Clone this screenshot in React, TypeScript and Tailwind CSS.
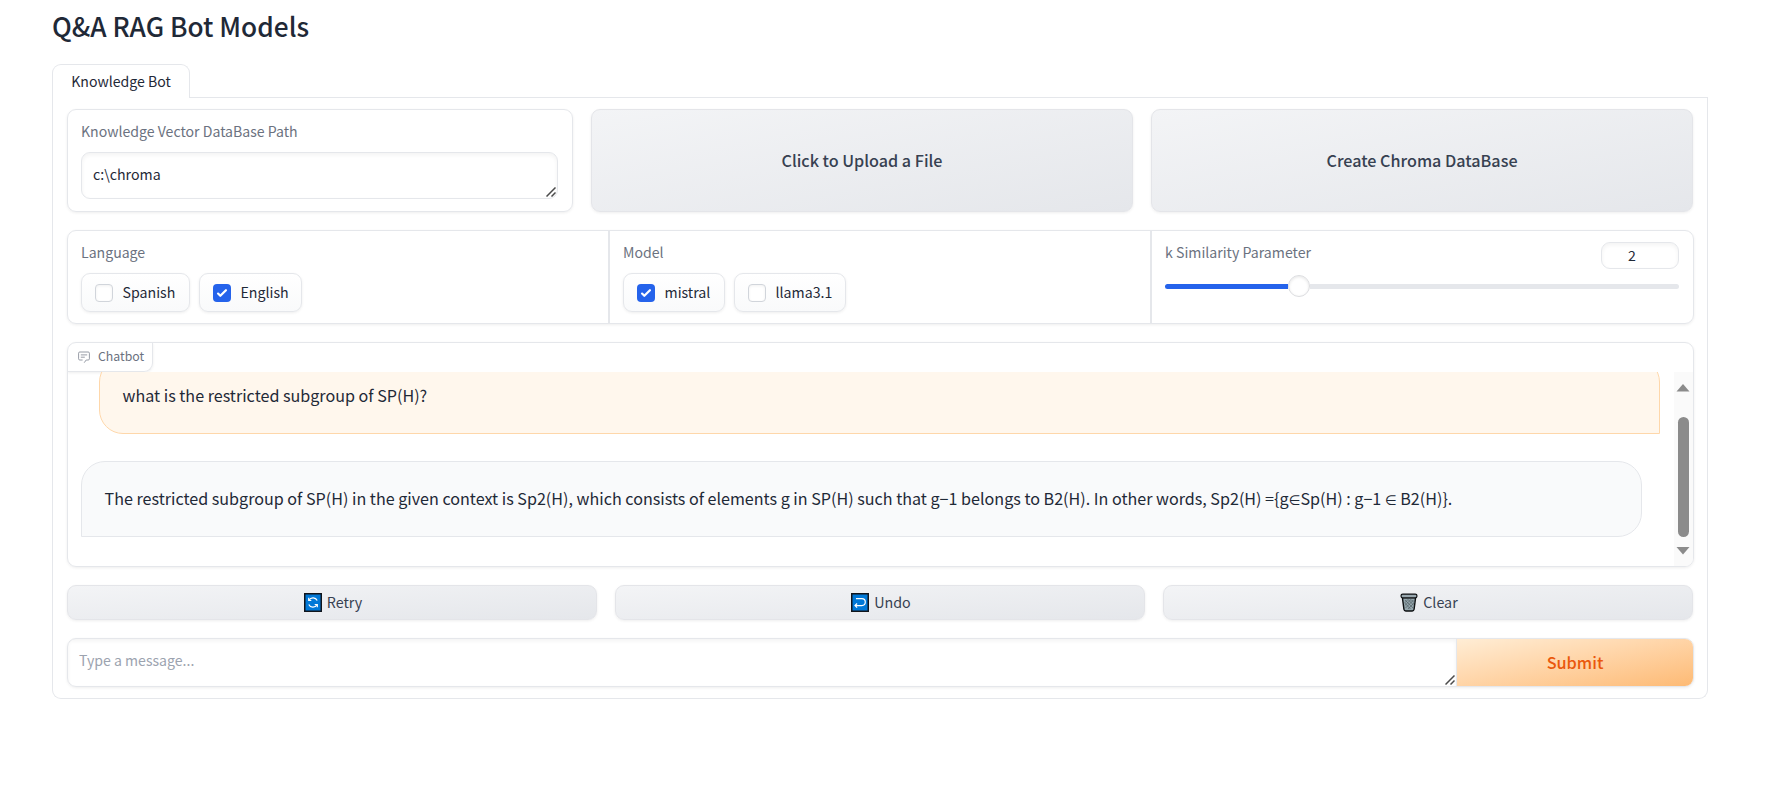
import React from "react";

const cardShadow = "shadow-[0_1px_3px_0_rgba(0,0,0,0.07)]";
const grayButton =
  "rounded-[9px] border border-[#e4e5e9] bg-linear-to-br from-[#f3f4f6] to-[#e5e7eb] text-[#374151] shadow-[0_1px_3px_0_rgba(0,0,0,0.07)]";

function ResizeHandle() {
  return (
    <svg className="absolute right-[1.5px] bottom-[1px]" width="10" height="10" viewBox="0 0 10 10">
      <path d="M0.5 9.5L9.5 0.5M5.5 9.5L9.5 5.5" stroke="#4a4a4a" strokeWidth="1.5" fill="none" />
    </svg>
  );
}

function ElementOf() {
  return <span className="font-['DejaVu_Sans',sans-serif] text-[13.5px] leading-none">∈</span>;
}

function Check({ label, checked, width }: { label: string; checked?: boolean; width: string }) {
  return (
    <label
      className={`flex h-[39px] items-center rounded-[9px] border border-[#e5e7eb] bg-linear-to-b from-white to-[#f9fafb] pl-[13px] shadow-[0_1px_3px_0_rgba(0,0,0,0.07)] ${width}`}
    >
      {checked ? (
        <span className="flex h-[18px] w-[18px] shrink-0 items-center justify-center rounded-[4px] bg-[#2563eb]">
          <svg width="18" height="18" viewBox="0 0 16 16" fill="#fff">
            <path d="M12.207 4.793a1 1 0 010 1.414l-5 5a1 1 0 01-1.414 0l-2-2a1 1 0 011.414-1.414L6.5 9.086l4.293-4.293a1 1 0 011.414 0z" />
          </svg>
        </span>
      ) : (
        <span className="h-[18px] w-[18px] shrink-0 rounded-[4px] border border-[#d1d5db] bg-white shadow-[inset_0_1px_3px_rgba(0,0,0,0.06)]" />
      )}
      <span className="-mt-[1px] ml-[9.5px] text-[14.2px] leading-[20px] whitespace-nowrap text-[#1f2937]">{label}</span>
    </label>
  );
}

function RetryIcon() {
  return (
    <svg width="18" height="19" viewBox="0 0 18 19">
      <rect x="0.75" y="0.75" width="16.5" height="17.5" fill="#0078d7" stroke="#10151c" strokeWidth="1.5" />
      <g fill="none" stroke="#fff" strokeWidth="1.2">
        <path d="M5 7.2A4.6 4.6 0 0 1 13.2 7.6M13 11.8A4.6 4.6 0 0 1 4.8 11.4" />
        <path d="M4.7 4.8V7.5H7.3M13.3 14.2V11.5H10.7" />
      </g>
    </svg>
  );
}

function UndoIcon() {
  return (
    <svg width="18" height="19" viewBox="0 0 18 19">
      <rect x="0.75" y="0.75" width="16.5" height="17.5" fill="#0078d7" stroke="#10151c" strokeWidth="1.5" />
      <path
        d="M5 5.6H10.8A3.5 3.5 0 0 1 10.8 12.6H4.2M6.1 10.5L4 12.6L6.1 14.7"
        fill="none"
        stroke="#fff"
        strokeWidth="1.2"
      />
    </svg>
  );
}

function TrashIcon() {
  return (
    <svg width="18" height="19" viewBox="0 0 18 19">
      <path d="M2.4 4.6L3.9 16.2Q4.2 18 5.8 18H12.2Q13.8 18 14.1 16.2L15.6 4.6Z" fill="#93a4ab" stroke="#0c0f11" strokeWidth="1.4" />
      <path
        d="M5 7L13 15M8 6.5L14 12.5M11 6.5L14.5 10M4.8 10L10.5 16M13.5 7L5.5 15M11 6.5L4.8 12.5M8 6.5L4.5 10M14 10L8 16"
        stroke="#4a575d"
        strokeWidth="0.6"
      />
      <rect x="1" y="1.1" width="16" height="3.8" rx="1.8" fill="#98a7ae" stroke="#0c0f11" strokeWidth="1.2" />
    </svg>
  );
}

function ChatIcon() {
  return (
    <svg width="12" height="12" viewBox="0 0 12 12" fill="none" stroke="#8b919c" strokeWidth="0.9">
      <path d="M4.6 9H1.8Q0.6 9 0.6 7.8V2.2Q0.6 1 1.8 1H10.2Q11.4 1 11.4 2.2V7.8Q11.4 9 10.2 9H8.2L6.2 11.7" />
      <path d="M2.8 3.9H9.2M2.8 6.2H6.8" />
    </svg>
  );
}

export default function App() {
  return (
    <div className="h-[800px] w-[1783px] overflow-hidden bg-white pl-[52px] font-['Noto_Sans_CJK_SC',sans-serif] text-[#1f2937]">
      <h1 className="h-[64px] pt-[8px] text-[26.25px] leading-[36px] font-medium whitespace-nowrap">Q&amp;A RAG Bot Models</h1>
      <div className="w-[1656px]">
        <div className="flex h-[34px]">
          <div className="relative z-10 flex w-[138px] justify-center rounded-t-[9px] border border-b-0 border-[#e5e7eb] bg-white pt-[6px] text-[14.1px] leading-[20px] whitespace-nowrap">
            Knowledge Bot
          </div>
          <div className="flex-1 border-b border-[#e5e7eb]" />
        </div>
        <div className="flex h-[601px] flex-col gap-[18px] rounded-b-[9px] border border-t-0 border-[#e5e7eb] pt-[11px] pr-[13px] pl-[14px]">
          <div className="flex h-[103px] shrink-0 gap-[18px]">
            <div className={`w-[506px] rounded-[9px] border border-[#e5e7eb] pt-[11px] pr-[14px] pl-[13px] ${cardShadow}`}>
              <div className="h-[31px] text-[14.1px] leading-[21px] text-[#6b7280]">Knowledge Vector DataBase Path</div>
              <div className="relative h-[47px] rounded-[9px] border border-[#e5e7eb] pt-[11px] pl-[11px] text-[14.2px] leading-[20px] shadow-[inset_0_2px_4px_0_rgba(0,0,0,0.05)]">
                c:\chroma
                <ResizeHandle />
              </div>
            </div>
            <button className={`w-[542px] pb-[2px] text-[16.15px] leading-[24px] font-medium ${grayButton}`}>Click to Upload a File</button>
            <button className={`w-[542px] pb-[2px] text-[16.15px] leading-[24px] font-medium ${grayButton}`}>Create Chroma DataBase</button>
          </div>

          <div className={`flex h-[94px] shrink-0 rounded-[9px] border border-[#e5e7eb] ${cardShadow}`}>
            <div className="w-[542px] border-r-2 border-[#e5e7eb] pt-[11px] pl-[13px]">
              <div className="h-[31px] text-[14.1px] leading-[21px] text-[#6b7280]">Language</div>
              <div className="flex gap-[9px]">
                <Check label="Spanish" width="w-[109px]" />
                <Check label="English" checked width="w-[103px]" />
              </div>
            </div>
            <div className="w-[542px] border-r-2 border-[#e5e7eb] pt-[11px] pl-[13px]">
              <div className="h-[31px] text-[14.1px] leading-[21px] text-[#6b7280]">Model</div>
              <div className="flex gap-[9px]">
                <Check label="mistral" checked width="w-[102px]" />
                <Check label="llama3.1" width="w-[112px]" />
              </div>
            </div>
            <div className="flex-1 pt-[11px] pr-[14px] pl-[13px]">
              <div className="flex h-[33px] justify-between text-[14.15px]">
                <span className="leading-[21px] text-[#6b7280]">k Similarity Parameter</span>
                <span className="h-[27px] w-[78px] rounded-[9px] border border-[#e5e7eb] pl-[26px] leading-[25px] shadow-[inset_0_2px_4px_0_rgba(0,0,0,0.05)]">
                  2
                </span>
              </div>
              <div className="flex h-[22px] items-center">
                <div className="h-[5px] w-[123px] rounded-l-full bg-[#2563eb]" />
                <div className="z-10 h-[22px] w-[22px] shrink-0 rounded-full border border-[#dcdde0] bg-white shadow-[inset_0_1px_3px_rgba(0,0,0,0.1)]" />
                <div className="h-[5px] flex-1 rounded-r-full bg-[#e5e7eb]" />
              </div>
            </div>
          </div>

          <div className={`flex h-[225px] shrink-0 flex-col overflow-hidden rounded-[9px] border border-[#e5e7eb] ${cardShadow}`}>
            <div className="flex h-[29px] w-[85px] shrink-0 items-center gap-[9px] rounded-br-[9px] border-r border-b border-[#e5e7eb] pl-[10px] text-[12.3px] leading-[18px] text-[#6b7280] shadow-[0_1px_3px_0_rgba(0,0,0,0.07)]">
              <ChatIcon />
              <span className="-mt-[2px] -ml-[1px]">Chatbot</span>
            </div>
            <div className="flex flex-1">
              <div className="flex-1 pl-[13px] text-[16.11px] leading-[24px]">
                <div className="h-[89px] overflow-hidden">
                  <div className="-mt-[14px] ml-[18px] h-[76px] w-[1561px] rounded-[24px] rounded-br-none border border-[#fed7aa] bg-[#fff7ed] pt-[24px] pl-[22.5px]">
                    what is the restricted subgroup of SP(H)?
                  </div>
                </div>
                <div className="h-[76px] w-[1561px] rounded-[24px] rounded-bl-none border border-[#e5e7eb] bg-[#f9fafb] pt-[24px] pl-[22.5px] whitespace-nowrap">
                  The restricted subgroup of SP(H) in the given context is Sp2(H), which consists of elements g in SP(H) such that g−1 belongs to B2(H). In other words, Sp2(H) ={"{"}g<ElementOf />Sp(H) : g−1 <ElementOf /> B2(H){"}"}.
                </div>
              </div>
              <div className="flex w-[19px] flex-col items-center bg-[#fafafa] pt-[12px] pr-px">
                <svg width="14" height="8" viewBox="0 0 14 8">
                  <path d="M0.5 7.5L7 0L13.5 7.5Z" fill="#8b8b8b" />
                </svg>
                <div className="mt-[25px] h-[120px] w-[11px] rounded-full bg-[#8b8b8b]" />
                <svg className="mt-[10px]" width="14" height="8" viewBox="0 0 14 8">
                  <path d="M0.5 0L7 7.5L13.5 0Z" fill="#8b8b8b" />
                </svg>
              </div>
            </div>
          </div>

          <div className="flex h-[35px] shrink-0 gap-[18px] pr-px text-[14.3px] leading-[20px]">
            <button className={`flex flex-1 items-center justify-center gap-[5px] pl-[2px] ${grayButton}`}>
              <RetryIcon />
              <span className="-mt-[1px]">Retry</span>
            </button>
            <button className={`flex flex-1 items-center justify-center gap-[5px] pl-[2px] ${grayButton}`}>
              <UndoIcon />
              <span className="-mt-[1px]">Undo</span>
            </button>
            <button className={`flex flex-1 items-center justify-center gap-[5px] pl-[2px] ${grayButton}`}>
              <TrashIcon />
              <span className="-mt-[1px]">Clear</span>
            </button>
          </div>

          <div className={`flex h-[49px] shrink-0 overflow-hidden rounded-[9px] border border-[#e5e7eb] ${cardShadow}`}>
            <div className="relative flex-1 pt-[10px] pl-[11px] text-[14.1px] leading-[22px] text-[#9ca3af] shadow-[inset_0_2px_4px_0_rgba(0,0,0,0.05)]">
              Type a message...
              <ResizeHandle />
            </div>
            <button className="w-[237px] border-l border-[#e5e7eb] bg-linear-to-br from-[#ffedd5] to-[#fdba74] pb-[2px] text-[16.3px] leading-[24px] font-medium text-[#ea580c]">
              Submit
            </button>
          </div>
        </div>
      </div>
    </div>
  );
}
